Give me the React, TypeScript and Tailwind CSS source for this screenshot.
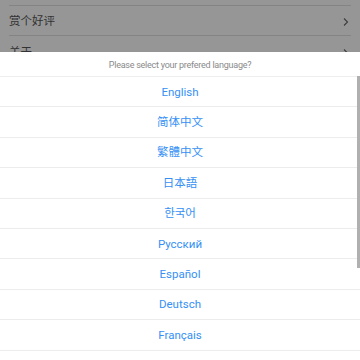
import React from "react";

const langs = ["English", "简体中文", "繁體中文", "日本語", "한국어", "Русский", "Español", "Deutsch", "Français"];

export default function App() {
  const font = { fontFamily: 'Roboto, "Noto Sans CJK SC", "Noto Sans CJK KR", sans-serif' };
  return (
    <div className="relative w-[360px] h-[360px] overflow-hidden bg-white" style={font}>
      <div className="flex flex-col bg-[#fafafa] h-[52px] overflow-hidden pt-[5px]">
        <div className="shrink-0 mx-[9px] border-t border-[#dcdcdc]" />
        <div className="shrink-0 h-[30px] mx-[9px] pt-[2px] flex items-center justify-between border-b border-[#dcdcdc] text-[11.5px] text-[#555]">
          <span>赏个好评</span>
          <svg width="8" height="10" viewBox="0 0 8 10" className="mr-[1px]"><path d="M2 1.5 L5.5 5 L2 8.5" fill="none" stroke="#666" strokeWidth="1.1" /></svg>
        </div>
        <div className="shrink-0 h-[30px] mx-[9px] pt-[4px] flex items-center justify-between text-[11.5px] text-[#555]">
          <span>关于</span>
          <svg width="8" height="10" viewBox="0 0 8 10" className="mr-[1px]"><path d="M2 1.5 L5.5 5 L2 8.5" fill="none" stroke="#666" strokeWidth="1.1" /></svg>
        </div>
      </div>
      <div className="absolute left-0 top-0 w-[360px] h-[52px] bg-black/40" />
      <div className="flex flex-col">
        <div className="h-[25px] shrink-0 flex items-center justify-center pt-[3px] text-[9px] tracking-[-0.25px] text-[#8a8a8a] border-b border-[#eeeeee]">
          Please select your prefered language?
        </div>
        {langs.map((l) => (
          <div key={l} className="h-[30.4px] shrink-0 flex items-center justify-center pt-[1px] text-[11.5px] text-[#3590f5] border-b border-[#ececec]">
            {l}
          </div>
        ))}
      </div>
      <div className="absolute left-[357px] top-[76px] w-[2.5px] h-[192px] bg-[#b0b0b0]" />
    </div>
  );
}
